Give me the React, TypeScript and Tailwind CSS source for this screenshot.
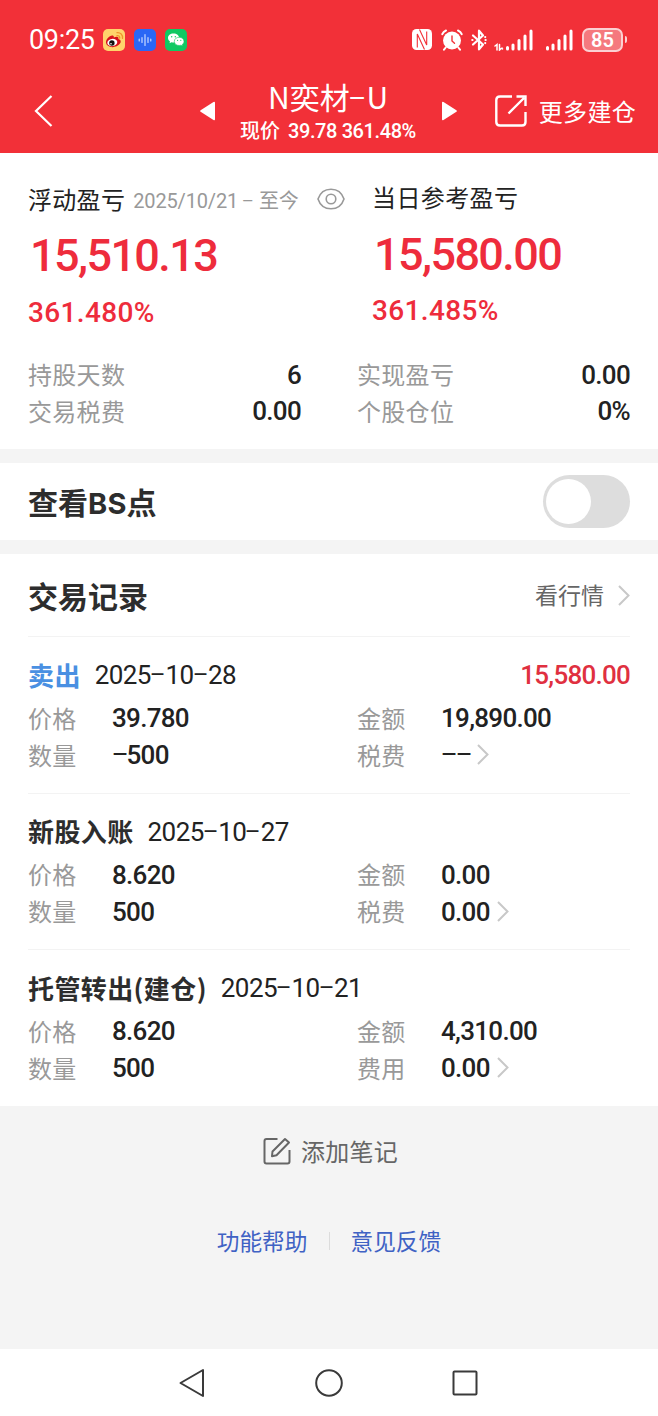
import clsx from "clsx";
import { ReactNode } from "react";

interface IRecord {
  action: string;
  sell?: boolean;
  date: string;
  profit?: string;
  price: string;
  count: string;
  amount: string;
  feeLabel: string;
  fee: string;
}

const records: IRecord[] = [
  {
    action: "卖出",
    sell: true,
    date: "2025-10-28",
    profit: "15,580.00",
    price: "39.780",
    count: "-500",
    amount: "19,890.00",
    feeLabel: "税费",
    fee: "--",
  },
  {
    action: "新股入账",
    date: "2025-10-27",
    price: "8.620",
    count: "500",
    amount: "0.00",
    feeLabel: "税费",
    fee: "0.00",
  },
  {
    action: "托管转出(建仓)",
    date: "2025-10-21",
    price: "8.620",
    count: "500",
    amount: "4,310.00",
    feeLabel: "费用",
    fee: "0.00",
  },
];

// Hyphen stretched to the width of a figure
const Dash = () => (
  <span className="ml-[0.122em] mr-[0.162em] inline-block w-[0.276em] -translate-y-[0.06em] scale-x-[1.9] scale-y-[0.85] font-['Roboto',sans-serif] tracking-normal">
    -
  </span>
);

const Num = ({ children, className }: { children: string; className?: string }) => (
  <span
    className={clsx(
      "font-['Roboto','Noto_Sans_CJK_SC',sans-serif] whitespace-nowrap",
      className || "mt-[2px] text-[26px] font-medium tracking-[-0.7px]"
    )}
  >
    {children.split(/(-)/).map((part, i) => (part === "-" ? <Dash key={i} /> : part))}
  </span>
);

const Chevron = ({ className }: { className?: string }) => (
  <svg width="12" height="21" viewBox="0 0 12 21" className={className} fill="none" stroke="#c8c8c8" strokeWidth="2">
    <path d="M1 1l9.5 9.5L1 20" />
  </svg>
);

const WeiboIcon = () => (
  <svg width="22" height="22" viewBox="0 0 22 22">
    <rect width="22" height="22" rx="5" fill="#ffd46b" />
    <path d="M3 14C2.500 10 8 5 10.500 7c.6.6.3 1.500.3 1.500 3-1.300 5.200-.8 4.600 1.500 2.500.7 3 2.600 1.600 4.600C13.500 19.500 4 19.300 3 14z" fill="#d8121c" />
    <ellipse cx="9.300" cy="13.500" rx="5" ry="3.600" fill="#fff" transform="rotate(-8 9.300 13.500)" />
    <circle cx="8.900" cy="14" r="2.700" fill="#111" />
    <circle cx="8" cy="14.800" r=".8" fill="#fff" />
    <path d="M14 6.600c1.800-.3 3 .9 2.700 2.500M14 3.700c3.400-.4 6 2 5.500 5.600" stroke="#f0952b" strokeWidth="1.300" fill="none" strokeLinecap="round" />
  </svg>
);

const VoiceIcon = () => (
  <svg width="22" height="22" viewBox="0 0 22 22">
    <rect width="22" height="22" rx="5" fill="#2a67f5" />
    <path d="M5.200 10v2M8 8.500v5M11 5.500v11M14 8.500v5M16.800 10v2" stroke="#d7e5ff" strokeWidth="1.100" strokeLinecap="round" />
  </svg>
);

const WechatIcon = () => (
  <svg width="22" height="22" viewBox="0 0 22 22">
    <rect width="22" height="22" rx="5" fill="#0fc963" />
    <path d="M8.500 4.500C5.200 4.500 3 6.500 3 9c0 1.500.8 2.700 2 3.500l-.5 1.800 2-1.100c.6.2 1.300.3 2 .3 3.300 0 5.600-2 5.600-4.500S11.800 4.500 8.500 4.500z" fill="#fff" />
    <path d="M14.200 8.300c-2.900 0-4.900 1.800-4.900 4.100s2 4.100 4.900 4.100c.6 0 1.200-.1 1.700-.3l1.700.9-.4-1.500c1.100-.7 1.800-1.900 1.800-3.200 0-2.300-2-4.100-4.800-4.100z" fill="#fff" stroke="#0fc963" strokeWidth=".6" />
    <g fill="#0fc963">
      <circle cx="6.700" cy="7.800" r=".7" />
      <circle cx="10.300" cy="7.800" r=".7" />
      <circle cx="12.600" cy="11.300" r=".6" />
      <circle cx="15.800" cy="11.300" r=".6" />
    </g>
  </svg>
);

const NfcIcon = () => (
  <svg width="20" height="21" viewBox="0 0 20 21">
    <rect width="20" height="21" rx="4.500" fill="#fff" />
    <path d="M5.300 18.500V5L12.500 20.500M7.500 .5L14.700 16V2.500" stroke="#f23038" strokeWidth="1.100" fill="none" />
  </svg>
);

const AlarmIcon = () => (
  <svg width="22" height="22" viewBox="0 0 22 22" fill="none" stroke="#fff" strokeWidth="2" strokeLinecap="round">
    <circle cx="11" cy="11.500" r="9" fill="#fff" stroke="none" />
    <path d="M1.300 5.200Q2.300 2.500 5 1.500M20.700 5.200Q19.700 2.500 17 1.500M4.700 18.500L3 20.700M17.300 18.500L19 20.700" />
    <path d="M11 7V12l2.500 2.200" stroke="#f23038" strokeWidth="1.400" />
  </svg>
);

const BluetoothIcon = () => (
  <svg width="16" height="22" viewBox="0 0 16 22" fill="none" stroke="#fff" strokeWidth="2.200" strokeLinejoin="round" strokeLinecap="round">
    <path d="M2 6.500l10 9L8 20.300V1.700L12 6.500l-10 9" />
    <path d="M1.300 11h.2M14.500 11h.2M14.200 8v.1M14.200 14v.1" />
  </svg>
);

const Bars = ({ children, width }: { children?: ReactNode; width: number }) => (
  <svg width={width} height="22" viewBox={`${39 - width} 0 ${width} 22`} stroke="#fff" strokeWidth="3" strokeLinecap="round">
    {children}
    <path d="M13.500 18.500v1.500M19 16v4M25 11.500V20M31 7v13M37 2v18" />
  </svg>
);

const StatusBar = () => (
  <div className="flex h-[79px] items-center pl-[29px] pr-[31px]">
    <Num className="mt-[2px] w-[66px] text-[27px] leading-none tracking-[-0.3px]">09:25</Num>
    <div className="ml-2 flex gap-[9px]">
      <WeiboIcon />
      <VoiceIcon />
      <WechatIcon />
    </div>
    <div className="ml-auto flex items-center">
      <NfcIcon />
      <div className="ml-[9px]"><AlarmIcon /></div>
      <div className="ml-2"><BluetoothIcon /></div>
      <div className="ml-[7px]">
        <Bars width={39}>
          <path d="M1 17l2-1.500V21M5.500 15.500V21l2.500-2" strokeWidth="1.500" fill="none" />
          <path d="M8.500 19.800v.2" strokeWidth="1.500" />
        </Bars>
      </div>
      <div className="ml-[12px]"><Bars width={28} /></div>
      <div className="ml-[9px] flex h-6 w-[41px] items-center justify-center rounded-[7px] border-2 border-[#fbd0d2] bg-[#f5797e]">
        <Num className="text-[20px] font-semibold leading-none">85</Num>
      </div>
      <div className="ml-[2px] h-[7px] w-[2px] rounded-r bg-[#fbd0d2]" />
    </div>
  </div>
);

const Header = () => (
  <header className="h-[153px] bg-[#f23038] text-white">
    <StatusBar />
    <div className="flex h-[64px] items-center pl-[34px] pr-[22px]">
      <svg width="19" height="32" viewBox="0 0 19 32" fill="none" stroke="#fff" strokeWidth="2.200">
        <path d="M17.500 1L2 16l15.500 15" />
      </svg>
      <svg width="15" height="20" viewBox="0 0 15 20" className="ml-[147px]" fill="#fff">
        <path d="M.6 9.200L13.500.9q1.500-.8 1.500.9v16.400q0 1.700-1.500.9L.6 10.800q-1-.8 0-1.600z" />
      </svg>
      <div className="ml-[11px] flex w-[204px] flex-col items-center pt-[5px]">
        <div className="flex h-[33px] items-center text-[30px] leading-none">
          <h1>
            N奕材
            <Dash />U
          </h1>
        </div>
        <div className="flex h-[33px] items-center text-[20px] leading-none">
          <span className="font-medium">现价</span>
          <Num className="ml-[8px] mt-px text-[20px] font-medium tracking-[-0.4px]">39.78 361.48%</Num>
        </div>
      </div>
      <svg width="15" height="20" viewBox="0 0 15 20" className="ml-[12px]" fill="#fff">
        <path d="M14.400 9.200L1.500.9Q0 .1 0 1.800v16.400q0 1.700 1.500.9l12.900-8.300q1-.8 0-1.600z" />
      </svg>
      <svg width="32" height="32" viewBox="0 0 32 32" className="ml-auto" fill="none" stroke="#fff" strokeWidth="2.400">
        <path d="M17 1.500H5Q1.300 1.500 1.300 5v22q0 3.500 3.700 3.500h22q3.500 0 3.500-3.500V17M13.500 18.500L29 3M21.500 1.500h9v9.500" />
      </svg>
      <span className="ml-3 text-2xl leading-none tracking-[0.3px]">更多建仓</span>
    </div>
  </header>
);

const StatRow = ({ label, value }: { label: string; value: string }) => (
  <div className="flex h-[36.500px] items-center justify-between">
    <span className="text-2xl leading-none tracking-[0.3px] text-[#999]">{label}</span>
    <Num>{value}</Num>
  </div>
);

const Summary = () => (
  <section className="h-[296px] bg-white px-7 pt-[27px]">
    <div className="flex h-[176px] text-[#ee2c3c]">
      <div className="w-[344px]">
        <div className="flex h-[37px] items-center leading-none">
          <span className="text-2xl tracking-[0.3px] text-[#222]">浮动盈亏</span>
          <Num className="ml-2 mt-1 text-[20px] tracking-[-0.15px] text-[#999]">2025/10/21 - 至今</Num>
          <svg width="28" height="22" viewBox="0 0 28 22" className="ml-auto mr-[27px]" fill="none" stroke="#999" strokeWidth="1.600">
            <path d="M1 11C3 5 8 1.200 14 1.200S25 5 27 11c-2 6-7 9.800-13 9.800S3 17 1 11z" />
            <circle cx="14" cy="11" r="4.800" />
          </svg>
        </div>
        <div className="-mt-px flex h-[78px] items-center pl-0.5">
          <Num className="text-[45px] font-medium leading-none tracking-[-1.6px]">15,510.13</Num>
        </div>
        <div className="mt-px flex h-9 items-center">
          <Num className="text-[28px] font-medium leading-none tracking-[0.35px]">361.480%</Num>
        </div>
      </div>
      <div className="-mt-[2px]">
        <div className="flex h-[37px] items-center text-2xl leading-none tracking-[0.4px] text-[#222]">当日参考盈亏</div>
        <div className="flex h-[78px] items-center pl-0.5">
          <Num className="text-[45px] font-medium leading-none tracking-[-1.6px]">15,580.00</Num>
        </div>
        <div className="flex h-9 items-center">
          <Num className="text-[28px] font-medium leading-none tracking-[0.35px]">361.485%</Num>
        </div>
      </div>
    </div>
    <div className="grid grid-cols-[273px_273px] justify-between">
      <StatRow label="持股天数" value="6" />
      <StatRow label="实现盈亏" value="0.00" />
      <StatRow label="交易税费" value="0.00" />
      <StatRow label="个股仓位" value="0%" />
    </div>
  </section>
);

const Field = ({ label, value, arrow }: { label: string; value: string; arrow?: boolean }) => (
  <div className="flex h-[37px] items-center">
    <span className="w-[84px] text-2xl leading-none tracking-[0.3px] text-[#999]">{label}</span>
    <Num>{value}</Num>
    {arrow && <Chevron className="ml-[7px]" />}
  </div>
);

const RecordItem = ({ record }: { record: IRecord }) => (
  <div className="h-[156.500px] border-t border-[#f3f3f3] pt-[15px]">
    <div className="mb-[2px] flex h-[45px] items-center leading-none">
      <span className={clsx("text-[26px] font-bold tracking-[0.4px]", record.sell ? "text-[#4a90e2]" : "text-[#2d2d2d]")}>
        {record.action}
      </span>
      <Num className="ml-[14px] mt-px text-[26px] tracking-[-0.6px]">{record.date}</Num>
      {record.profit && (
        <Num className="ml-auto text-[26px] font-medium tracking-[-0.75px] text-[#e03040]">{record.profit}</Num>
      )}
    </div>
    <div className="grid grid-cols-[329px_1fr]">
      <Field label="价格" value={record.price} />
      <Field label="金额" value={record.amount} />
      <Field label="数量" value={record.count} />
      <Field label={record.feeLabel} value={record.fee} arrow />
    </div>
  </div>
);

const App = () => {
  return (
    <div className="flex h-[1416px] w-full flex-col bg-[#f4f4f4] font-['Noto_Sans_CJK_SC',sans-serif] text-[#222]">
      <Header />
      <Summary />

      <section className="mt-[14px] flex h-[77px] items-center justify-between bg-white px-7">
        <h2 className="text-[30px] font-bold leading-none text-[#2d2d2d]">
          查看<span className="font-['Inter',sans-serif] text-[29px] tracking-[0.2px]">BS</span>点
        </h2>
        <button className="flex h-[53px] w-[87px] items-center rounded-full bg-[#ddd] pl-[3px]">
          <span className="size-[45px] rounded-full bg-white" />
        </button>
      </section>

      <section className="mt-[14px] h-[552px] bg-white px-7">
        <div className="flex h-[82px] items-center justify-between leading-none">
          <h2 className="text-[30px] font-bold text-[#2d2d2d]">交易记录</h2>
          <div className="flex items-center text-[23px] text-[#666]">
            <span className="-mt-[2px]">看行情</span>
            <Chevron className="ml-[14px]" />
          </div>
        </div>
        {records.map((record) => (
          <RecordItem key={record.date} record={record} />
        ))}
      </section>

      <div className="flex h-[90px] items-center justify-center gap-[10px] pl-[3px] text-2xl leading-none tracking-[0.3px] text-[#666]">
        <svg width="28" height="28" viewBox="0 0 28 28" fill="none" stroke="#666" strokeWidth="2">
          <path d="M14.500 2H3.500Q1.500 2 1.500 4v20.500q0 2 2 2h21q2 0 2-2V13" />
          <path d="M9.500 14.500L22 2l4 3.500-12.500 12.700-4.500 1z" strokeLinejoin="round" />
        </svg>
        添加笔记
      </div>
      <div className="flex h-[90px] items-center justify-center text-[22.700px] leading-none text-[#3f62c4]">
        功能帮助
        <span className="mx-[21px] h-[18px] w-px bg-[#dcdcdc]" />
        意见反馈
      </div>

      <nav className="mt-auto flex h-[67px] items-center bg-white pl-[179px]">
        <svg width="26" height="30" viewBox="0 0 26 30" fill="none" stroke="#3a3a3a" strokeWidth="2" strokeLinejoin="round">
          <path d="M1.500 15L24 2v26z" />
        </svg>
        <svg width="28" height="28" viewBox="0 0 28 28" className="ml-[110px]" fill="none" stroke="#3a3a3a" strokeWidth="2">
          <circle cx="14" cy="14" r="12.800" />
        </svg>
        <svg width="26" height="26" viewBox="0 0 26 26" className="ml-[109px]" fill="none" stroke="#3a3a3a" strokeWidth="2">
          <rect x="1.500" y="1.500" width="23" height="23" rx="1" />
        </svg>
      </nav>
    </div>
  );
};

export default App;
